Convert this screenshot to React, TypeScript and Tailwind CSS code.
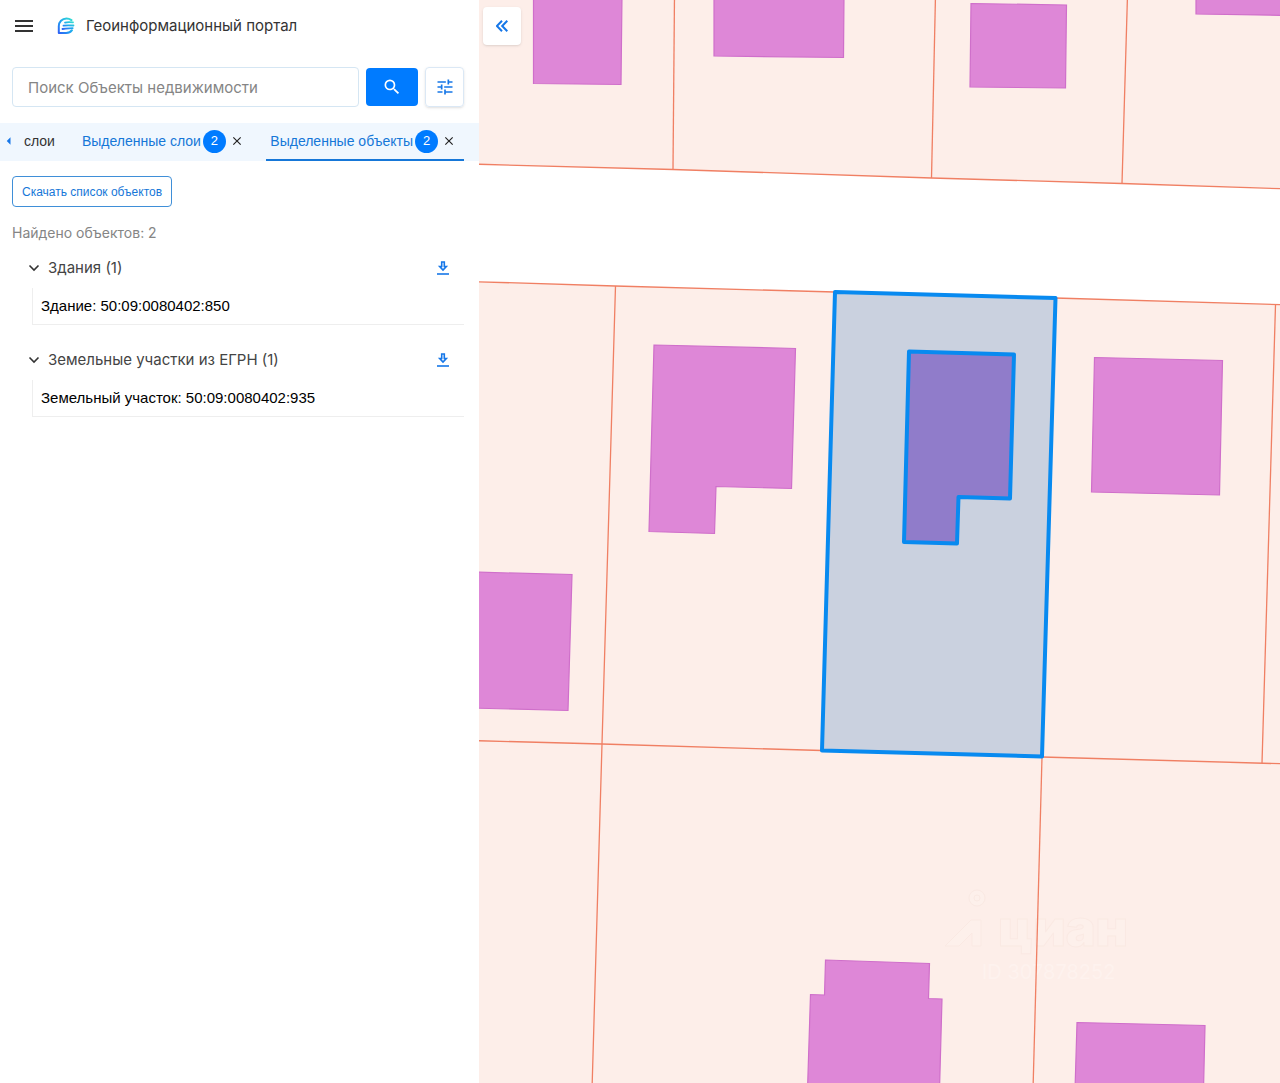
import { useState } from "react";
import { MdMenu, MdSearch, MdTune, MdClose, MdArrowLeft } from "react-icons/md";

const GROUPS = [
  { id: "buildings", title: "Здания (1)", items: ["Здание: 50:09:0080402:850"] },
  { id: "parcels", title: "Земельные участки из ЕГРН (1)", items: ["Земельный участок: 50:09:0080402:935"] },
];

const PARCELS = [
  "-10,-10 1300,-10 1300,189 1280,188 1122,183 931,178 673,169.5 479,164 -10,150",
  "470,281.5 615,286 835,292 1055,298 1275,305 1300,305.5 1300,1100 470,1100",
];

const BORDERS = [
  "674.5,-5 673,169.5",
  "935.5,-5 931.5,178",
  "1127.5,-5 1122,183.5",
  "470,164 673,169.5 931.5,178 1122,183.5 1290,189",
  "470,281.5 615,286 835,292 1055,298 1290,305",
  "615.5,286 602,744 592,1090",
  "1275.5,305 1262,763",
  "470,740.5 602,744 822,750.5 1042,757 1290,764",
  "1042,757 1033,1090",
];

const BUILDINGS = [
  "533.5,-5 533.5,83.5 621,84.5 622,-5",
  "714,-5 714,56 843.5,57.5 844,-5",
  "971,3.5 1066.5,5 1065.5,88 970,87",
  "1196,-5 1196,14 1290,15.5 1290,-5",
  "654,345 795.5,348.5 791.5,488.5 716,486.5 714.5,533.5 649,531.5",
  "1094.5,357.5 1222.5,360.5 1219.5,495 1091.5,492",
  "470,572 572,574.5 568,710.5 470,708",
  "825.5,960 929.5,963.5 928.5,998.5 942,999 939.5,1090 807.5,1090 810.5,994.5 824.5,995",
  "1077,1022.5 1205,1025.5 1203.5,1090 1075,1090",
];

function Logo() {
  return (
    <svg viewBox="0 0 18 18" className="size-[18px]" aria-hidden="true">
      <defs>
        <linearGradient id="logo-fill" x1="0" y1="1" x2="1" y2="0">
          <stop offset="0" stopColor="#2f62f5" />
          <stop offset="0.5" stopColor="#1fa6f0" />
          <stop offset="1" stopColor="#35e0d0" />
        </linearGradient>
      </defs>
      <g fill="none" stroke="url(#logo-fill)" strokeLinecap="round" strokeLinejoin="round">
        <path strokeWidth="2" d="M14.500 3.200C13 2.200 11.300 1.600 9.500 1.600 5 1.600 1.800 5 1.800 9.200V16h7.400c2.400 0 4.500-1 5.800-2.800" />
        <path strokeWidth="1.8" d="M8 5.600c2.500-.8 5-.7 8-.2M6.500 8.700c3-.7 6-.5 10-.2M5.500 12c3.500-.8 6.500-.6 10.200-.9" />
      </g>
    </svg>
  );
}

function DownloadIcon() {
  return (
    <svg viewBox="0 0 12 14" className="h-3.5 w-3" fill="none" stroke="currentColor" strokeWidth="1.6" aria-hidden="true">
      <path d="M4.700 1h2.600v4.500h2L6 9 2.700 5.500h2z" />
      <path d="M0 13h12" />
    </svg>
  );
}

function MapView() {
  return (
    <svg viewBox="479 0 801 1083" preserveAspectRatio="xMinYMin slice" className="absolute inset-0 size-full" role="img" aria-label="Карта">
      {PARCELS.map((p) => <polygon key={p} points={p} fill="#fdeee9" />)}

      {/* watermark */}
      <g fill="#fdf0eb" stroke="#fae9e3" strokeWidth="1" fontFamily="Inter, sans-serif">
        <circle cx="977" cy="898" r="8" />
        <circle cx="977" cy="898" r="3" />
        <path d="M945 946l26-26h10v26h-9v-13l-13 13z" />
        <text x="998" y="946" fontSize="50" fontWeight="900">циан</text>
        <text x="982" y="979" fontSize="20" stroke="none" fill="#fef2ee">ID 307878252</text>
      </g>

      {BORDERS.map((p) => <polyline key={p} points={p} fill="none" stroke="#f07f63" strokeWidth="1.3" />)}
      {BUILDINGS.map((p) => <polygon key={p} points={p} fill="#de87d7" stroke="#cf6fca" strokeWidth="1.2" />)}

      {/* selected parcel and building */}
      <g stroke="#088af0" strokeWidth="4" strokeLinejoin="round">
        <polygon points="835,292 1055.500,298 1042,756.500 822,750.500" fill="#cad1df" />
        <polygon points="909,351.500 1014,354.500 1010,498.500 958.500,497 957,543.500 904,542" fill="#907cca" />
      </g>
    </svg>
  );
}

export default function App() {
  const [query, setQuery] = useState("");
  const [closed, setClosed] = useState<string[]>([]);

  const toggle = (id: string) =>
    setClosed((c) => (c.includes(id) ? c.filter((x) => x !== id) : [...c, id]));

  const badgeClass = "ml-0.5 flex size-[23px] items-center justify-center rounded-full bg-[#007bff] text-[13px] text-white";

  return (
    <div className="flex min-h-screen bg-white font-['Liberation_Sans',sans-serif] text-[#222]">
      <aside className="w-[479px] shrink-0">
        <header className="flex h-[52px] items-center px-3">
          <button aria-label="Меню" className="text-[#333]"><MdMenu size={24} /></button>
          <a href="#" className="ml-[21px] flex items-center gap-[11px] font-[Inter,sans-serif] text-[15px] text-[#333]">
            <Logo />
            Геоинформационный портал
          </a>
        </header>

        <form className="flex items-center gap-[7px] pt-[15px] pr-[15px] pl-3" onSubmit={(e) => e.preventDefault()}>
          <input
            type="text"
            aria-label="Поиск"
            placeholder="Поиск Объекты недвижимости"
            value={query}
            onChange={(e) => setQuery(e.target.value)}
            className="h-10 min-w-0 flex-1 rounded-[4px] border border-[#d5e6f3] px-[15px] font-[Inter,sans-serif] text-[15px] placeholder:text-[#858585] focus:outline-none"
          />
          <button type="submit" aria-label="Найти" className="flex h-[38px] w-[52px] items-center justify-center rounded-[4px] bg-[#007bff] text-white">
            <MdSearch size={20} />
          </button>
          <button type="button" aria-label="Фильтры" className="flex h-10 w-[39px] items-center justify-center rounded-[4px] border border-[#dbe8f5] text-[#1677e8] shadow-sm">
            <MdTune size={20} />
          </button>
        </form>

        {/* Tabs */}
        <nav className="mt-4 flex h-[38px] items-stretch bg-[#f0f7fe] pr-[15px] text-sm">
          <button aria-label="Назад" className="flex w-6 items-center border-b-2 border-transparent text-[#1677e8]"><MdArrowLeft size={18} /></button>
          <button className="border-b-2 border-transparent text-[#333]">слои</button>
          <div className="ml-[27px] flex items-center border-b-2 border-transparent">
            <button className="text-[#1677d8]">Выделенные слои</button>
            <span className={badgeClass}>2</span>
            <button aria-label="Закрыть слои" className="ml-1 text-[#222]"><MdClose size={14} /></button>
          </div>
          <div className="ml-auto flex items-center border-b-2 border-[#1677d8] pr-2 pl-1">
            <button className="text-[#1677d8]">Выделенные объекты</button>
            <span className={badgeClass}>2</span>
            <button aria-label="Закрыть объекты" className="ml-1 text-[#222]"><MdClose size={14} /></button>
          </div>
        </nav>

        <div className="pr-[15px] pl-3">
          <button className="mt-[15px] flex h-[31px] items-center rounded-[4px] border border-[#3f8fd8] px-[9px] text-xs text-[#1677d8]">
            Скачать список объектов
          </button>
          <p className="mt-4 mb-[5px] font-[Inter,sans-serif] text-sm leading-5 text-[#858585]">Найдено объектов: 2</p>

          {GROUPS.map((g) => (
            <section key={g.id} className="mb-[15px] pl-5">
              <div className="flex h-10 items-center justify-between pr-[15px]">
                <button onClick={() => toggle(g.id)} className="flex items-center gap-2 font-[Inter,sans-serif] text-[15px] text-[#444]">
                  <svg viewBox="0 0 12 12" className="-ml-1 size-3" fill="none" stroke="#333" strokeWidth="1.6" aria-hidden="true">
                    <path d="M1.500 3.500 6 8l4.500-4.500" />
                  </svg>
                  {g.title}
                </button>
                <button aria-label={`Скачать: ${g.title}`} className="text-[#1677e8]"><DownloadIcon /></button>
              </div>
              {!closed.includes(g.id) && (
                <ul className="border-b border-l border-[#eee]">
                  {g.items.map((item) => (
                    <li key={item} className="px-2 py-1.5 text-[15px] leading-6 text-black">{item}</li>
                  ))}
                </ul>
              )}
            </section>
          ))}
        </div>
      </aside>

      <main className="relative flex-1 overflow-hidden">
        <MapView />
        <button aria-label="Свернуть панель" className="absolute top-[7px] left-1 flex size-[38px] items-center justify-center rounded-[4px] bg-white text-[#1677e8] shadow">
          <svg viewBox="0 0 12 12" className="size-3" fill="none" stroke="currentColor" strokeWidth="2" aria-hidden="true">
            <path d="M6 .8.900 6 6 11.200M11.300.8 6.200 6l5.100 5.200" />
          </svg>
        </button>
      </main>
    </div>
  );
}
